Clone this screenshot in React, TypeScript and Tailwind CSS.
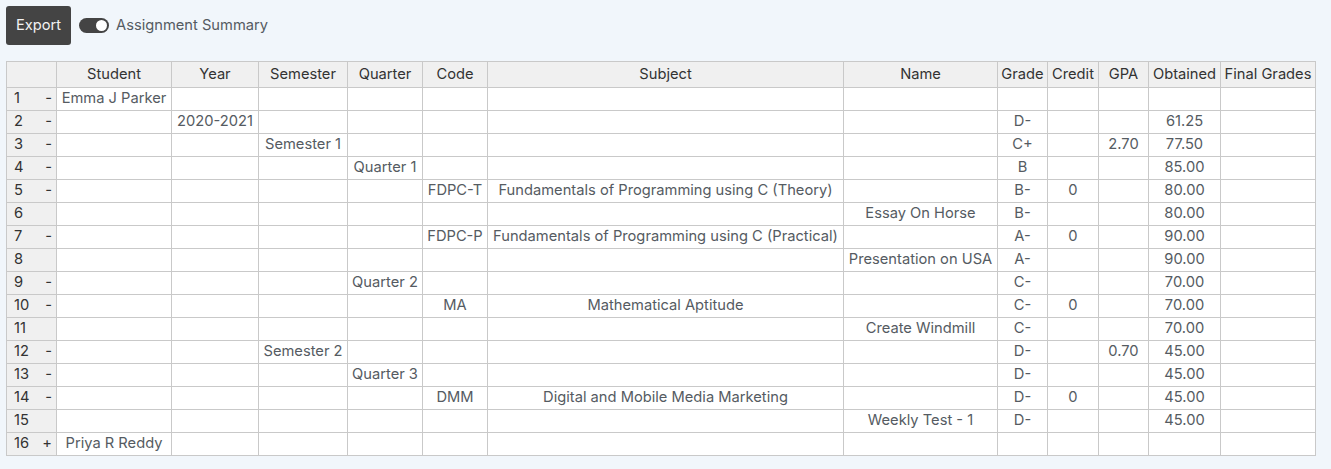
import React from "react";

type Row = [string, string, string, string, string, string, string, string, string, string, string, string, string, string];

const rows: Row[] = [
  ["1", "-", "Emma J Parker", "", "", "", "", "", "", "", "", "", "", ""],
  ["2", "-", "", "2020-2021", "", "", "", "", "", "D-", "", "", "61.25", ""],
  ["3", "-", "", "", "Semester 1", "", "", "", "", "C+", "", "2.70", "77.50", ""],
  ["4", "-", "", "", "", "Quarter 1", "", "", "", "B", "", "", "85.00", ""],
  ["5", "-", "", "", "", "", "FDPC-T", "Fundamentals of Programming using C (Theory)", "", "B-", "0", "", "80.00", ""],
  ["6", "", "", "", "", "", "", "", "Essay On Horse", "B-", "", "", "80.00", ""],
  ["7", "-", "", "", "", "", "FDPC-P", "Fundamentals of Programming using C (Practical)", "", "A-", "0", "", "90.00", ""],
  ["8", "", "", "", "", "", "", "", "Presentation on USA", "A-", "", "", "90.00", ""],
  ["9", "-", "", "", "", "Quarter 2", "", "", "", "C-", "", "", "70.00", ""],
  ["10", "-", "", "", "", "", "MA", "Mathematical Aptitude", "", "C-", "0", "", "70.00", ""],
  ["11", "", "", "", "", "", "", "", "Create Windmill", "C-", "", "", "70.00", ""],
  ["12", "-", "", "", "Semester 2", "", "", "", "", "D-", "", "0.70", "45.00", ""],
  ["13", "-", "", "", "", "Quarter 3", "", "", "", "D-", "", "", "45.00", ""],
  ["14", "-", "", "", "", "", "DMM", "Digital and Mobile Media Marketing", "", "D-", "0", "", "45.00", ""],
  ["15", "", "", "", "", "", "", "", "Weekly Test - 1", "D-", "", "", "45.00", ""],
  ["16", "+", "Priya R Reddy", "", "", "", "", "", "", "", "", "", "", ""],
];

const headers = ["Student", "Year", "Semester", "Quarter", "Code", "Subject", "Name", "Grade", "Credit", "GPA", "Obtained", "Final Grades"];
const widths = [50, 115, 87, 89, 75, 65, 356, 154, 50, 51, 50, 72, 95];

export default function App() {
  return (
    <div className="min-h-screen bg-[#f1f6fb] pt-[6px] pl-[6px] pr-[15px] font-['Inter','Liberation_Sans',sans-serif] text-[14.7px] leading-[20px] text-[#555b62]">
      <div className="flex items-center">
        <button className="h-[39px] w-[65px] rounded-[3px] bg-[#444444] pb-[2px] text-[#f2f2f2]">Export</button>
        <span className="ml-2 flex h-[15px] w-[30px] items-center justify-end rounded-full bg-[#444444] pr-[2px]">
          <span className="h-[11px] w-[11px] rounded-full bg-white" />
        </span>
        <span className="ml-[7px] pb-[2px]">Assignment Summary</span>
      </div>
      <table className="mt-[16px] w-[1310px] table-fixed border-collapse bg-white">
        <colgroup>
          {widths.map((w, i) => (
            <col key={i} style={{ width: w }} />
          ))}
        </colgroup>
        <thead>
          <tr className="h-[26px] bg-[#f0f0f0] text-[#333333]">
            <th className="border border-[#c9c9c9] p-0" />
            {headers.map((h) => (
              <th key={h} className="whitespace-nowrap border border-[#c9c9c9] p-0 pb-[2px] text-center font-normal">
                {h}
              </th>
            ))}
          </tr>
        </thead>
        <tbody>
          {rows.map((r) => (
            <tr key={r[0]} className="h-[23px]">
              <td className="border border-[#c9c9c9] bg-[#f0f0f0] p-0 pb-[2px] text-[#333333]">
                <div className="flex justify-between pl-[7px] pr-[4px]">
                  <span>{r[0]}</span>
                  <span>{r[1]}</span>
                </div>
              </td>
              {r.slice(2).map((c, i) => (
                <td key={i} className="whitespace-nowrap border border-[#c9c9c9] p-0 pb-[2px] text-center">
                  {c}
                </td>
              ))}
            </tr>
          ))}
        </tbody>
      </table>
    </div>
  );
}
